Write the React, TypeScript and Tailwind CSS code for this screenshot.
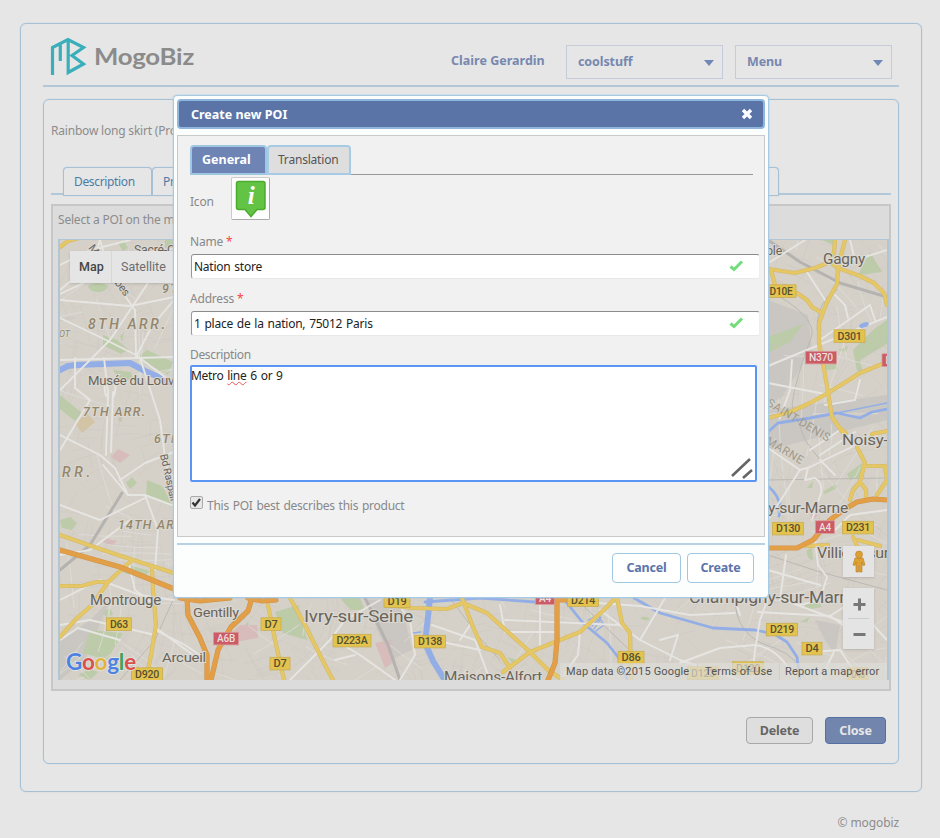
import React from "react";

const MAJOR = "#e5c765";
const MOTORWAY = "#e29f48";
const WATER = "#93aee6";
const PARK = "#bccba8";

function seeded(seed: number) {
  let s = seed;
  return () => {
    s = (s * 16807) % 2147483647;
    return s / 2147483647;
  };
}

function buildStreets(seed: number, count: number, length: number) {
  const rnd = seeded(seed);
  const out: string[] = [];
  for (let i = 0; i < count; i++) {
    const x = 55 + rnd() * 835;
    const y = 235 + rnd() * 450;
    const a = Math.sin(x / 70) + Math.cos(y / 60) + (rnd() > 0.5 ? Math.PI / 2 : 0);
    const l = length * (0.5 + rnd());
    const dx = Math.cos(a) * l;
    const dy = Math.sin(a) * l;
    const bend = (rnd() - 0.5) * 6;
    out.push(
      `M${x.toFixed(1)} ${y.toFixed(1)}q${(dx / 2 + bend).toFixed(1)} ${(dy / 2 - bend).toFixed(1)} ${dx.toFixed(1)} ${dy.toFixed(1)}`
    );
  }
  return out.join("");
}

const ALLEYS = buildStreets(77, 1700, 24);
const STREETS = buildStreets(4211, 230, 50);

const parks = [
  "M90 630 L123 633 L107 660 L83 653Z",
  "M147 480 L162 486 L174 508 L146 495Z",
  "M126 483 l6 -6 l5 6 l-7 6Z",
  "M60 520 l10 -3 l7 6 l-5 7 l-10 -2Z",
  "M147 350 L173 362 L168 375 L137 358Z",
  "M60 395 L82 413 L75 421 L60 409Z",
  "M88 286 q10 -6 20 0 q-2 6 -10 6 q-8 0 -10 -6Z",
  "M103 335 l14 5 l12 10 l-8 4 l-18 -9Z M120 336 l4 -4 l-2 10Z",
  "M113 370 l18 2 l2 8 l-14 -1Z M122 412 l-4 8 l4 2Z",
  "M118 243 l6 -2 l4 7 l-5 3Z M165 240 h9 v12 l-9 -4Z",
  "M122 572 l10 -6 l18 5 l-8 8Z",
  "M103 612 l7 -4 l3 6 l-6 4Z M78 675 l12 -6 l8 3 l-8 8Z",
  "M275 612 L298 605 L307 640 L283 633Z",
  "M240 630 h10 l-2 -8Z M340 598 h20 l5 12 l-14 0Z",
  "M887 320 L873 330 L853 350 L857 371 L863 373 L860 360 L887 344Z",
  "M768 337 L803 324 L790 342 L768 353Z",
  "M870 252 L882 272 L858 275Z M822 240 l14 0 l-3 5Z M838 350 l10 -4 l-2 6Z",
  "M825 365 l12 -2 l0 6 l-12 1Z M847 474 L862 463 L864 477 L850 480Z",
  "M823 492 l12 -8 l2 4 l-12 6Z M807 488 l6 -7 l-1 7Z",
  "M807 550 l5 -3 l1 13 q-7 -1 -6 -10Z M805 604 l12 -5 l5 8 l-17 3Z M800 622 l10 -5 l-3 5Z",
  "M507 657 l14 4 l-6 5Z M640 618 q6 -3 10 1 q-4 3 -10 -1Z",
];

const major = [
  "M60 247 L68 241 L79 238",
  "M60 535 L100 549 L130 559 L174 573",
  "M60 586 L82 586 L96 582 L108 582 L132 560",
  "M60 637 L76 619 L92 605 L108 582",
  "M152 567 L153 590 L156 625 L151 655 L146 680",
  "M268 605 L275 640 L284 680",
  "M290 598 L305 625 L325 665 L333 680",
  "M387 605 L413 608 L447 609 L463 603 L487 613 L530 652 L548 670 L563 680",
  "M462 598 L473 627 L482 647 L500 653 L510 668",
  "M503 672 L530 652 L580 632 L607 607 L615 598",
  "M617 598 L622 623 L630 633 L631 680",
  "M768 269 L775 270 L795 273 L815 268 L830 262 L838 268 L860 276 L874 283 L884 293 L887 305",
  "M845 240 L838 268 L837 284 L827 302 L819 323 L819 343 L823 363 L828 392 L832 417 L843 433",
  "M835 240 L834 252 L830 262",
  "M771 270 L775 285 M797 293 L807 300 L812 307 L822 313",
  "M768 418 L790 412 L810 403 L828 393 L860 373 L887 362",
  "M857 447 L865 463",
  "M865 466 L884 466 L890 480 M864 466 L860 482 L866 490 L866 500 M860 482 L853 490 L850 500",
  "M885 466 L887 480 L877 495 M872 434 L887 431 M840 428 L846 433",
  "M806 546 L828 545 M853 537 L858 548 L887 555 M858 540 L880 546",
];

const motorway = [
  "M60 550 L120 567 L174 589",
  "M187 598 L188 615 L200 638 L207 655 L207 680",
  "M252 598 L248 611 L231 627 L218 650 L211 680",
  "M180 598 L200 601 L230 598 M248 598 L262 601 L276 600",
  "M557 598 L557 640 L555 663 L548 680 M545 600 L570 600",
  "M768 548 L797 548 L813 540 L830 520 L845 509 L857 502 L873 499 L887 500",
];

const water = [
  "M60 370 L68 366 L77 365 L130 363 L145 371 L174 384",
  "M430 598 L428 617 L425 643 L433 661 L446 682",
];

const waterThin = [
  "M425 602 L480 598 L535 602",
  "M563 598 L583 623 L607 643 L618 657 L628 682",
  "M634 598 L660 613 L713 628 L755 630 L774 634 L787 642 L797 657 L800 682",
  "M768 432 L778 423 L810 418 L837 413 L860 418 L872 412 L887 409",
  "M768 486 Q784 500 779 516",
];

const canals = "M588 620 l10 -5 l6 10 l-8 6 M592 626 l9 -9 M600 620 l-6 9 M413 633 l8 -1 M837 413 L887 403";

const avenues = [
  "M60 318 L100 337 L136 355 L174 384 M60 294 L90 280 L174 248 M60 300 L130 306 L174 297",
  "M60 390 L110 340 L150 280 L174 262 M60 360 L174 357 M136 357 L152 326 L174 300",
  "M100 240 L110 275 L135 310 L136 355 M60 265 L90 250 L130 240",
  "M60 435 L100 455 L115 468 L128 495 M100 240 L93 262 L60 290",
  "M103 465 L128 495 L145 495 L174 506 M120 480 L145 463 L174 452 M75 358 L75 388 L90 400 L60 450",
  "M104 358 L108 392 L106 455 M113 392 L111 452 M106 396 q-4 -14 4 -18 q8 4 4 18",
  "M140 358 L160 420 L166 465 L174 480 M145 495 L158 530 L155 570",
  "M60 505 L100 520 L145 498 M60 600 L100 580 L140 595 L174 600 M60 625 L90 620 L155 635",
  "M60 640 L78 628 L120 640 M155 630 L185 645 L207 660 M60 555 L90 550 L130 520",
  "M128 560 L135 590 L155 605 M156 628 L200 660 M290 680 L330 640 L345 620 L380 600",
  "M335 640 L360 655 L395 680 M335 660 L355 655 M395 600 L410 620 L415 655 L400 680",
  "M433 640 L480 650 M432 625 L475 640 L490 680 M460 640 L470 625 M500 605 L505 632 L557 632",
  "M540 598 L540 650 M505 620 L620 625 M580 632 L578 655 L560 680 M557 600 L640 606 L690 615 L735 613",
  "M600 610 L640 640 L680 660 L740 680 M640 640 L665 598 M660 640 L678 635 L670 660 M735 600 L740 615",
  "M768 598 L760 620 L755 650 L752 680 M755 645 L720 648 L680 663 M758 612 L830 616 L850 630 M755 645 q20 2 35 25",
  "M785 600 L800 606 L843 622 M830 616 L852 602 L887 640 M812 652 L840 650 L860 680 M835 650 L820 680",
  "M768 366 L887 317 M768 383 L825 394 M780 418 L790 390 L792 360 M820 340 L870 305 L875 320",
  "M770 262 L805 240 M807 272 L825 300 M835 295 L845 305 L848 318 M825 405 L855 400 L860 380",
  "M768 448 L800 470 L810 467 L887 430 M808 468 L805 480 L815 478 q8 5 6 15 L812 520 M820 460 L835 475",
  "M768 520 L800 470 M815 540 L818 565 L827 577 L820 600 L800 605 M768 570 L820 585 M786 555 L780 600",
  "M820 455 L855 432 M810 450 L840 430 M887 510 L850 515 L835 530 M850 240 L855 260 L887 250",
];

const minorRail = [
  "M60 570 L90 545 L122 493", "M768 240 L800 262 L840 283 L887 297",
  "M365 598 L388 645 L400 680",
];

const thinRail = [
  "M174 598 L155 640 L120 680", "M450 598 L480 638 L500 660", "M768 290 Q815 315 812 335 Q795 380 792 405 L805 440 L820 460",
  "M768 555 L820 572 L887 590", "M735 598 q0 40 40 50 q25 10 30 32", "M768 480 L887 478", "M837 290 q-20 10 -20 40", "M575 598 L640 660",
];

type Sign = [number, number, string, number, boolean?];
const signs: Sign[] = [
  [119, 624, "D63", 25], [271, 624, "D7", 20], [280, 663.5, "D7", 20], [147, 674, "D920", 31],
  [352, 640.5, "D223A", 38], [430, 641.5, "D138", 31], [397, 601, "D19", 26], [583, 600, "D214", 31],
  [631, 657.5, "D86", 26], [782, 629.5, "D219", 31], [812, 648.5, "D4", 20], [781, 291, "D10E", 30],
  [849.5, 336, "D301", 31], [788, 528.5, "D130", 31], [858, 527.5, "D231", 31], [748, 668, "D120", 31],
  [703, 673, "D123", 31], [858, 674, "D45", 20], [226, 638.5, "A6B", 25, true], [821, 357.5, "N370", 31, true],
  [825, 527, "A4", 19, true], [545, 598, "A4", 19, true], [888, 360, "D", 12, true],
];

type Label = [number, number, string, number, number];
const towns: Label[] = [
  [88, 384.5, "Musée du Louvre", 12, 97], [134, 254, "Sacré-Cœur", 12, 62], [90, 605, "Montrouge", 14, 71],
  [193, 617, "Gentilly", 13, 46], [162, 662, "Arcueil", 13.5, 44], [304, 622, "Ivry-sur-Seine", 16, 109],
  [444, 682, "Maisons-Alfort", 14.5, 98], [689, 602.5, "Champigny-sur-Marne", 16, 169],
  [766, 254.5, "ole", 13, 16], [823, 264, "Gagny", 14.5, 42], [842, 445, "Noisy-", 15, 46],
  [768, 513, "y-sur-Marne", 14, 80], [817, 558, "Villiers-sur", 14, 72],
];
const districts: Label[] = [
  [88, 329, "8TH ARR.", 14, 77], [83, 416, "7TH ARR.", 12.5, 62], [154, 443, "6TH ARR.", 12.5, 62],
  [62, 477, "RR.", 14, 28], [118, 529, "14TH ARR.", 12.5, 69], [162, 293, "9TH ARR.", 12.5, 62],
];

function CityMap() {
  return (
    <svg width="827" height="440" viewBox="60 240 827 440" className="block font-[Roboto,sans-serif]">
      <rect x="60" y="240" width="827" height="440" fill="#d5d1c9" />
      <g fill="#cac7c2">
        <path d="M60 640 L90 620 L110 600 L85 660 L60 680Z" />
        <path d="M768 300 L808 315 L812 350 L780 400 L768 400Z" />
        <path d="M815 620 L840 625 L835 655 L825 640Z" />
        <path d="M768 410 L887 395 L887 420 L768 450Z" />
        <path d="M365 600 L400 598 L412 650 L390 660Z" />
      </g>
      {parks.map((d) => <path key={d} d={d} fill={PARK} />)}
      <path d="M87 413 L95 422 L82 433 L75 423Z" fill="#d3c4a4" />
      <g fill="#d7bcbb">
        <path d="M118 449 L130 455 L120 463 L111 457Z M104 538 l13 3 l-5 5 l-9 -4Z" />
        <path d="M240 625 L257 625 L258 638 L235 642 L232 632Z" />
        <path d="M375 643 L392 640 L393 662 L385 668Z M810 513 l8 2 l-6 6Z" />
      </g>
      <g fill="none" strokeLinejoin="round" strokeLinecap="round">
        <path d={ALLEYS} stroke="#c7c3bb" strokeWidth="0.6" opacity="0.55" />
        <path d={STREETS} stroke="#e0deda" strokeWidth="0.9" opacity="0.85" />
        {thinRail.map((d) => <path key={d} d={d} stroke="#bbb9b4" strokeWidth="1" />)}
        {minorRail.map((d) => <path key={d} d={d} stroke="#b5b3b0" strokeWidth="3" />)}
        {water.map((d) => <path key={d} d={d} stroke={WATER} strokeWidth="6" />)}
        {waterThin.map((d) => <path key={d} d={d} stroke={WATER} strokeWidth="2.8" />)}
        <path d={canals} stroke={WATER} strokeWidth="1.3" />
        {avenues.map((d) => <path key={d} d={d} stroke="#e6e5e2" strokeWidth="1.9" />)}
        {major.map((d) => <path key={d} d={d} stroke="#d3b869" strokeWidth="4.2" />)}
        {major.map((d) => <path key={d + "f"} d={d} stroke={MAJOR} strokeWidth="3.2" />)}
        {motorway.map((d) => <path key={d} d={d} stroke="#cf9348" strokeWidth="5.2" />)}
        {motorway.map((d) => <path key={d + "f"} d={d} stroke={MOTORWAY} strokeWidth="4.2" />)}
      </g>
      <ellipse cx="864" cy="325" rx="5" ry="2.5" fill={WATER} transform="rotate(-20 864 325)" />
      {signs.map(([x, y, t, w, red], i) => (
        <g key={i}>
          <rect x={x - w / 2} y={y - 6.2} width={w} height="12.6" fill={red ? "#cb5b64" : "#e3c34e"} stroke={red ? "#d99a9c" : "#c7ad52"} strokeWidth="0.8" />
          <text x={x} y={y + 3.6} fontSize="10" fontWeight="500" textAnchor="middle" textLength={w - 7} lengthAdjust="spacingAndGlyphs" fill={red ? "#eadfdf" : "#575030"}>{t}</text>
        </g>
      ))}
      <g fill="#69645c" stroke="#dcd9d3" strokeWidth="2" paintOrder="stroke" fontWeight="400">
        {towns.map(([x, y, t, s, w]) => (
          <text key={t} x={x} y={y} fontSize={s} textLength={w} lengthAdjust="spacingAndGlyphs">{t}</text>
        ))}
        <text fontSize="10.5" transform="translate(160 455) rotate(77)">Bd Raspail</text>
        <text fontSize="11" transform="translate(88 248) rotate(53)">Malesherbes</text>
      </g>
      <g fill="#94866a" stroke="#dcd9d3" strokeWidth="2" paintOrder="stroke" fontWeight="500" fontStyle="italic">
        {districts.map(([x, y, t, s, w]) => (
          <text key={t} x={x} y={y} fontSize={s} textLength={w}>{t}</text>
        ))}
        <text x="59" y="337" fontSize="9" fontWeight="400">OT</text>
      </g>
      <g fill="#a09a8c" fontSize="11.5" fontWeight="400" letterSpacing="0.5">
        <text transform="translate(766 405) rotate(31)">SAINT-DENIS</text>
        <text transform="translate(765 443) rotate(31)">MARNE</text>
      </g>
      <rect x="560" y="663" width="327" height="17" fill="#dedcd8" opacity="0.72" />
      <path d="M697.500 663V680M779.500 663V680" stroke="#d0ceca" />
      <g fontSize="11" fill="#555">
        <text x="566" y="675" textLength="123">Map data ©2015 Google</text>
        <text x="705" y="675" textLength="67">Terms of Use</text>
        <text x="785" y="675" textLength="94">Report a map error</text>
      </g>
      <g fontSize="22" fontWeight="700" stroke="#e6e6e6" strokeWidth="1.4" paintOrder="stroke" className="font-[Lato,sans-serif]">
        <text x="66" y="670" textLength="70" lengthAdjust="spacingAndGlyphs">
          <tspan fill="#4d83df">G</tspan><tspan fill="#d9514a">o</tspan><tspan fill="#e0b339">o</tspan><tspan fill="#4d83df">g</tspan><tspan fill="#42a05b">l</tspan><tspan fill="#d9514a">e</tspan>
        </text>
      </g>
    </svg>
  );
}

function Logo() {
  return (
    <svg width="150" height="42" viewBox="50 36 150 42" className="block">
      <g fill="none" stroke="#3aafbb" strokeWidth="3.200">
        <path d="M52.500 75V47.500L68 39.600L83.500 47.500L72 55.500L83.500 64L68.200 72.500V40" />
        <path d="M60.300 61V44.500" />
      </g>
      <text x="94" y="65" fontSize="23.500" fontWeight="700" fill="#8b8b8b" textLength="100" lengthAdjust="spacingAndGlyphs" className="font-[Lato,sans-serif]">MogoBiz</text>
    </svg>
  );
}

function HeaderSelect({ label }: { label: string }) {
  return (
    <div className="flex h-[34px] w-[157px] items-center justify-between border border-[#c5cbd8] pr-[8px] pl-[11px] font-bold text-[#7788b0]">
      <span className="text-[12.5px] tracking-[-0.1px]">{label}</span>
      <span className="mt-0.5 h-0 w-0 border-x-[5.500px] border-t-[6px] border-x-transparent border-t-[#7088b3]" />
    </div>
  );
}

function ValidMark() {
  return (
    <svg width="15" height="13" viewBox="0 0 15 13" className="mr-[15px] mb-[2px]">
      <path d="M1.500 7.500L5 10.500L13 2.500" fill="none" stroke="#73dc7c" strokeWidth="3" />
    </svg>
  );
}

function Field({ label, value }: { label: string; value: string }) {
  return (
    <div className="h-[57px]">
      <div className="h-[21px] leading-[18px] text-[#888]">{label} <span className="text-[#f44]">*</span></div>
      <div className="ml-px flex h-[25px] w-[569px] items-center justify-between rounded-[3px] border border-t-[#8b8b8b] border-r-[#eee] border-b-[#e8e8e8] border-l-[#999] bg-white pl-[2px] text-[#222]">
        <span className="tracking-[-0.25px] [word-spacing:1px]">{value}</span>
        <ValidMark />
      </div>
    </div>
  );
}

function PoiIcon() {
  return (
    <div className="flex h-[43px] w-[39px] justify-center rounded-[2px] border border-[#ccc] border-r-[#aaa] border-b-[#aaa] bg-[#fdfdfd] pt-px">
      <svg width="34" height="39" viewBox="0 0 34 39">
        <path d="M4.500 2.500H29Q31 2.500 31 4.500V28.500Q31 30.500 29 30.500H23L17 37.500L11 30.500H4.500Q2.500 30.500 2.500 28.500V4.500Q2.500 2.500 4.500 2.500Z" fill="#63c345" stroke="#4dab2f" strokeWidth="1.5" />
        <text x="17" y="25" textAnchor="middle" fontSize="25" fontWeight="700" fontStyle="italic" fill="#fff" className="font-['Liberation_Serif',serif]">i</text>
      </svg>
    </div>
  );
}

function PoiDialog() {
  return (
    <section className="absolute top-[95px] left-[173px] h-[503px] w-[596px] rounded-[4px] border border-[#a6cae3] bg-[#fcfefe] p-[3px] shadow-[0_0_2px_#a6cae3]">
      <header className="flex h-[30px] items-center justify-between rounded-[4px] border-2 border-[#8fb6dc] bg-[#5a74a8] pr-[10px] pl-[12px] font-bold text-white">
        <span className="pt-[2px] text-[12.5px] tracking-normal">Create new POI</span>
        <svg width="12" height="12" viewBox="0 0 12 12"><path d="M2 2L10 10M10 2L2 10" stroke="#fff" strokeWidth="3.400" /></svg>
      </header>
      <div className="mt-[6px] h-[402px] w-[588px] border border-[#c9c9c9] bg-[#f1f1f1] pt-[9px] pl-[12px]">
        <nav className="flex h-[30px] w-[563px] items-start border-b border-[#999]">
          <div className="flex h-[30px] w-[77px] items-center rounded-t-[4px] border-2 border-[#9fc6e2] bg-[#6d84b5] pl-[10px] text-[12.5px] font-bold tracking-normal text-white">General</div>
          <div className="flex h-[30px] w-[84px] items-center rounded-t-[4px] border-2 border-[#a6cbe4] bg-[#dedede] pl-[9px] text-[#555]">Translation</div>
        </nav>
        <div className="mt-[2px] flex h-[56px] items-start">
          <span className="w-[41px] pt-[16px] text-[#888]">Icon</span>
          <PoiIcon />
        </div>
        <Field label="Name" value="Nation store" />
        <Field label="Address" value="1 place de la nation, 75012 Paris" />
        <div className="h-[18px] leading-[16px] tracking-[-0.35px] text-[#888]">Description</div>
        <div className="flex h-[117px] w-[567px] justify-between rounded-[2px] border-2 border-[#5a94f5] bg-white leading-[17px] text-[#222]">
          <div className="-ml-px tracking-[-0.3px] [word-spacing:1px]">Metro <span className="underline decoration-[#e55] decoration-wavy decoration-1 underline-offset-1">line</span> 6 or 9</div>
          <svg width="24" height="24" viewBox="0 0 24 24" className="mr-px self-end"><path d="M2 20L20 3M13 22L22 14" stroke="#666" strokeWidth="2.600" /></svg>
        </div>
        <div className="flex pt-[14px]">
          <span className="flex h-[13px] w-[13px] items-center justify-center rounded-[2px] border border-[#aaa] bg-[#e7e7e7]">
            <svg width="11" height="11" viewBox="0 0 11 11"><path d="M1.500 5.500L4 8.500L9 2" fill="none" stroke="#333" strokeWidth="2.200" /></svg>
          </span>
          <span className="pt-px pl-[4px] tracking-[-0.25px] text-[#888] [word-spacing:0.9px]">This POI best describes this product</span>
        </div>
      </div>
      <footer className="mt-[6px] flex justify-end gap-[6px] border-t-2 border-[#b5d2e6] pt-[8px] pr-[11px] text-[12.5px] font-bold text-[#5b74aa]">
        <div className="flex h-[30px] w-[69px] items-center justify-center rounded-[4px] border border-[#9fc6e2] bg-white pb-px">Cancel</div>
        <div className="flex h-[30px] w-[67px] items-center justify-center rounded-[4px] border border-[#9fc6e2] bg-white pb-px">Create</div>
      </footer>
    </section>
  );
}

function MapPanel() {
  return (
    <div className="mt-[9px] h-[487px] w-[840px] border-2 border-[#c7c7c7] bg-[#dcdcdc] pl-[5px] text-[#8c8c8c]">
      <div className="h-[33px] pt-[5px]">Select a POI on the map</div>
      <div className="h-[441px] w-[831px] overflow-hidden border-t border-r-2 border-l-2 border-[#b1c6d5]">
        <div className="relative">
          <CityMap />
          <div className="absolute top-[11px] left-[10px] flex h-[32px] bg-[#e5e5e5] font-[Roboto,sans-serif] text-[12.5px] leading-[32px] tracking-normal shadow">
            <span className="w-[42px] border-r border-[#d8d8d8] pl-[9px] font-medium text-[#444]">Map</span>
            <span className="w-[64px] pl-[9px] text-[#6c6c6c]">Satellite</span>
          </div>
          <div className="absolute top-[306px] left-[783px] flex h-[31px] w-[31px] items-center justify-center bg-[#e4e4e4] shadow">
            <svg width="14" height="24" viewBox="0 0 14 24">
              <path d="M3 8H11L13 15L11 15.500L10 12V22H7.500V16H6.500V22H4V12L3 15.500L1 15Z" fill="#dda033" stroke="#b87d22" strokeWidth="0.600" />
              <circle cx="7" cy="4.500" r="3.500" fill="#dda033" stroke="#b87d22" strokeWidth="0.600" />
            </svg>
          </div>
          <div className="absolute top-[348px] left-[783px] flex h-[61px] w-[31px] flex-col items-center bg-[#e4e4e4] shadow">
            <svg width="31" height="61" viewBox="0 0 31 61"><path d="M10.500 16.500H22.500M16.500 10.500V22.500M10.500 46.500H22.500" stroke="#777" strokeWidth="3" /><path d="M5 30.500H26" stroke="#ccc" /></svg>
          </div>
        </div>
      </div>
    </div>
  );
}

export default function App() {
  return (
    <div className="relative h-[838px] w-[940px] overflow-hidden bg-[#e6e6e6] pt-[23px] pl-[20px] font-['Noto_Sans',sans-serif] text-[12px] leading-[18px] tracking-[-0.2px] whitespace-nowrap">
      <main className="h-[769px] w-[902px] rounded-[6px] border border-[#a6c0d5] pt-px pl-[22px] shadow-[0_0_1px_#a6c0d5]">
        <div className="flex h-[62px] w-[856px] items-start border-b-2 border-[#b2c8d8] pt-[11px] pl-[7px]">
          <Logo />
          <div className="ml-auto flex gap-3 pt-[9px] pr-[7px]">
            <span className="w-[103px] pt-[7px] text-[12.5px] font-bold tracking-[0.02px] text-[#7788b0]">Claire Gerardin</span>
            <HeaderSelect label="coolstuff" />
            <HeaderSelect label="Menu" />
          </div>
        </div>
        <div className="mt-[12px] h-[665px] w-[856px] rounded-[6px] border border-[#a6c0d5] pt-px pl-[7px] text-[#8c8c8c] shadow-[0_0_1px_#a6c0d5]">
          <div className="h-[66px] pt-[21px]">Rainbow long skirt (Product)</div>
          <div className="flex h-[28px] w-[840px] items-start border-b-2 border-[#b2c8d8] pl-[12px] text-[#4b7ca6]">
            <div className="h-[29px] w-[89px] rounded-t-[4px] border border-[#a6c0d5] bg-[#e6e6e6] pt-[5px] pl-[10px] tracking-[-0.35px] shadow-[0_0_1px_#a6c0d5]">Description</div>
            <div className="h-[29px] w-[627px] rounded-t-[4px] border border-[#a6c0d5] bg-[#e6e6e6] pt-[5px] pl-[10px] shadow-[0_0_1px_#a6c0d5]">Properties</div>
          </div>
          <MapPanel />
          <div className="mt-[26px] flex justify-end gap-[12px] pr-[12px] text-[12.5px] font-bold">
            <div className="flex h-[27px] w-[67px] items-center justify-center rounded-[4px] border border-[#a8a8a8] bg-[#dedede] text-[#666]">Delete</div>
            <div className="flex h-[27px] w-[61px] items-center justify-center rounded-[4px] border border-[#566fa2] bg-[#7185ad] text-[#e6e6e6]">Close</div>
          </div>
        </div>
      </main>
      <footer className="mt-[22px] w-[879px] text-right tracking-[-0.1px] text-[#8c8c8c]">© mogobiz</footer>
      <PoiDialog />
    </div>
  );
}
